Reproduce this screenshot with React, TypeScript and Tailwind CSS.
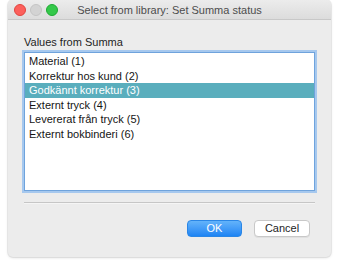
const rows = [
  "Material (1)",
  "Korrektur hos kund (2)",
  "Godkännt korrektur (3)",
  "Externt tryck (4)",
  "Levererat från tryck (5)",
  "Externt bokbinderi (6)",
];

export default function App() {
  return (
    <div className="w-[340px] h-[260px] bg-white font-['Liberation_Sans',Arial,sans-serif]">
      <div className="ml-[8px] w-[323px] h-[257px] flex flex-col bg-[#ececec] rounded-[5px] overflow-hidden shadow-[0_0_0_1px_rgba(0,0,0,0.06),0_1px_3px_rgba(0,0,0,0.12)]">
        {/* Title bar */}
        <div className="relative h-[20px] shrink-0 flex items-center justify-center bg-gradient-to-b from-[#ececec] to-[#dcdcdc] border-b border-[#c8c8c8]">
          <div className="absolute left-[6px] top-[4px] flex gap-[4px]">
            <span className="w-[12px] h-[12px] rounded-full bg-[#fc605c] border border-[#e0443e]" />
            <span className="w-[12px] h-[12px] rounded-full bg-[#d3d3d3] border border-[#c4c4c4]" />
            <span className="w-[12px] h-[12px] rounded-full bg-[#34c84a] border border-[#1eaa33]" />
          </div>
          <span className="text-[11px] leading-[14px] text-[#4d4d4d]">Select from library: Set Summa status</span>
        </div>

        {/* Content */}
        <div className="flex-1 flex flex-col px-[16px] pt-[15px]">
          <div className="text-[11px] leading-[14px] text-[#1e1e1e]">Values from Summa</div>
          <div className="mt-[3px] h-[139px] bg-white border border-[#6fa3dc] shadow-[0_0_0_2px_#a6c8ee] pt-[1px]">
            {rows.map((r, i) => (
              <div
                key={r}
                className={
                  i === 2
                    ? "h-[14.5px] leading-[14.5px] pl-[4px] text-[11px] bg-[#5aaebd] text-white"
                    : "h-[14.5px] leading-[14.5px] pl-[4px] text-[11px] text-[#151515]"
                }
              >
                {r}
              </div>
            ))}
          </div>

          <div className="mt-[11px] h-[2px] border-t border-[#c6c6c6] bg-[#f5f5f5]" />

          <div className="mt-[16px] flex justify-end gap-[12px] pr-[5px]">
            <button className="w-[55px] h-[17px] rounded-[4px] bg-gradient-to-b from-[#63b3fa] to-[#1c84f4] border border-[#2a86e6] text-white text-[11px] leading-[15px] font-medium">
              OK
            </button>
            <button className="w-[56px] h-[17px] rounded-[4px] bg-white border border-[#c8c8c8] text-[#1e1e1e] text-[11px] leading-[15px] shadow-[0_1px_0_rgba(0,0,0,0.05)]">
              Cancel
            </button>
          </div>
        </div>
      </div>
    </div>
  );
}
